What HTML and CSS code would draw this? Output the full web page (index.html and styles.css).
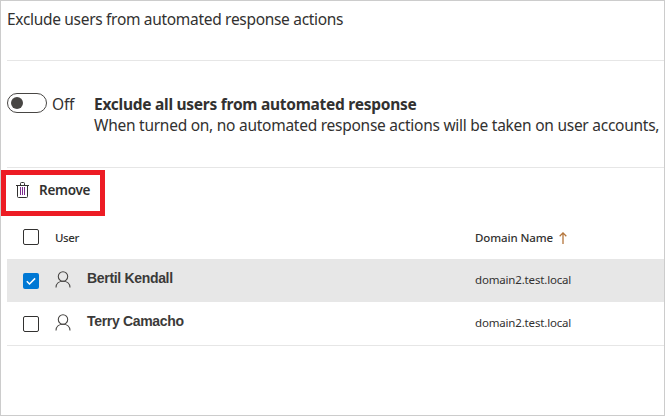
FILE: index.html
```html
<!DOCTYPE html>
<html lang="en">
<head>
<meta charset="utf-8">
<title>Exclude users</title>
<link rel="stylesheet" href="styles.css">
</head>
<body>
<main class="panel">
  <header class="intro"><span class="intro-text">Exclude users from automated response actions</span></header>
  <section class="setting">
    <div class="toggle"><span class="knob"></span></div>
    <span class="toggle-label">Off</span>
    <div class="setting-text">
      <div><strong class="setting-title">Exclude all users from automated response</strong></div>
      <div><span class="setting-desc">When turned on, no automated response actions will be taken on user accounts,</span></div>
    </div>
  </section>
  <div class="toolbar">
    <button class="remove">
      <svg class="trash" width="13" height="17" viewBox="0 0 13 17" fill="none" stroke="#323130">
        <path d="M0 3.500h13M4.500 3.500v-2q0-1 1-1h2q1 0 1 1v2M1.500 3.500v11q0 1 1 1h8q1 0 1-1V3.500"/>
        <path class="slats" d="M4.500 5v8M6.500 5v8M8.500 5v8"/>
      </svg>
      <span class="remove-text">Remove</span>
    </button>
  </div>
  <div class="table">
    <div class="row head">
      <span class="check"></span>
      <span class="user-head"><span class="t-user">User</span></span>
      <span class="domain-head"><span class="t-domain">Domain Name</span>
        <svg class="sort" width="8" height="12" viewBox="0 0 8 12" fill="none" stroke="#b5763c" stroke-width="1.300"><path d="M4 12V1M0.700 4.200L4 0.900L7.300 4.200"/></svg></span>
    </div>
    <div class="row selected">
      <span class="check on"><svg width="16" height="16" viewBox="0 0 16 16" fill="none" stroke="#fff" stroke-width="1.500"><path d="M3.800 8.300l2.700 2.700l5.600-5.600"/></svg></span>
      <svg class="person" width="16" height="17" viewBox="0 0 16 17" fill="none" stroke="#484644" stroke-width="1.100"><circle cx="8" cy="5.500" r="4.700"/><path d="M1 16.500c0-4 3-6.300 7-6.300s7 2.300 7 6.300"/></svg>
      <span class="name"><span class="t-bertil">Bertil Kendall</span></span>
      <span class="domain">domain2.test.local</span>
    </div>
    <div class="row">
      <span class="check"></span>
      <svg class="person" width="16" height="17" viewBox="0 0 16 17" fill="none" stroke="#484644" stroke-width="1.100"><circle cx="8" cy="5.500" r="4.700"/><path d="M1 16.500c0-4 3-6.300 7-6.300s7 2.300 7 6.300"/></svg>
      <span class="name"><span class="t-terry">Terry Camacho</span></span>
      <span class="domain">domain2.test.local</span>
    </div>
  </div>
</main>
</body>
</html>
```

FILE: styles.css
```css
* { box-sizing: border-box; }
body { margin: 0; background: #fff; color: #323130; font-family: "Noto Sans", "Open Sans", sans-serif; }
.panel { width: 665px; height: 416px; border: 1px solid #ccc; padding-left: 6px; overflow: hidden; white-space: nowrap; }
.intro { height: 60px; padding-top: 7px; border-bottom: 1px solid #e6e6e6; font-size: 15.5px; line-height: 22px; letter-spacing: -0.31px; }
.setting { display: flex; height: 107px; padding-top: 32px; border-bottom: 1px solid #e6e6e6; }
.toggle { display: flex; align-items: center; width: 40px; height: 20px; padding-left: 3px; border: 1px solid #484644; border-radius: 10px; }
.knob { width: 12px; height: 12px; border-radius: 50%; background: #484644; }
.toggle-label { width: 42px; margin-left: 5px; font-size: 15.5px; line-height: 22px; letter-spacing: -0.2px; }
.setting-text { padding-top: 1px; line-height: 21px; font-size: 15.5px; }
.setting-title { font-weight: 700; letter-spacing: -0.26px; }
.setting-desc { letter-spacing: -0.26px; }
.toolbar { height: 49px; padding-top: 2px; margin-left: -6px; }
.remove { display: flex; align-items: flex-start; width: 104px; height: 46px; padding: 7px 0 0 10px; border: 5px solid #ed1c24; background: #fff; color: inherit; font: 600 13.5px/16px "Noto Sans", "Open Sans", sans-serif; letter-spacing: -0.3px; }
.trash { flex: none; margin-right: 10px; }
.slats { stroke: #7b2d8e; }
.row { display: flex; height: 43px; padding-left: 16px; border-bottom: 1px solid #e6e6e6; font-size: 11.5px; line-height: 16px; }
.selected { background: #e7e7e7; background-clip: padding-box; border-bottom-color: #fff; }
.check { flex: none; width: 16px; height: 16px; margin-top: 13px; border: 1px solid #323130; border-radius: 2px; }
.head .check { margin-top: 12px; }
.check.on { border: 0; background: #0078d4; }
.check.on svg { display: block; }
.person { flex: none; margin: 11px 0 0 16px; }
.head { font-weight: 500; letter-spacing: -0.1px; }
.user-head { width: 420px; margin: 13px 0 0 16px; }
.t-user { letter-spacing: -0.4px; }
.domain-head { margin-top: 13px; }
.sort { margin-left: 3px; vertical-align: -2px; }
.name { width: 388px; margin: 10px 0 0 16px; color: #3b3a39; font: bold 14px/17px "Liberation Sans", sans-serif; letter-spacing: -0.32px; }
.domain { margin-top: 12px; letter-spacing: -0.17px; }
```
